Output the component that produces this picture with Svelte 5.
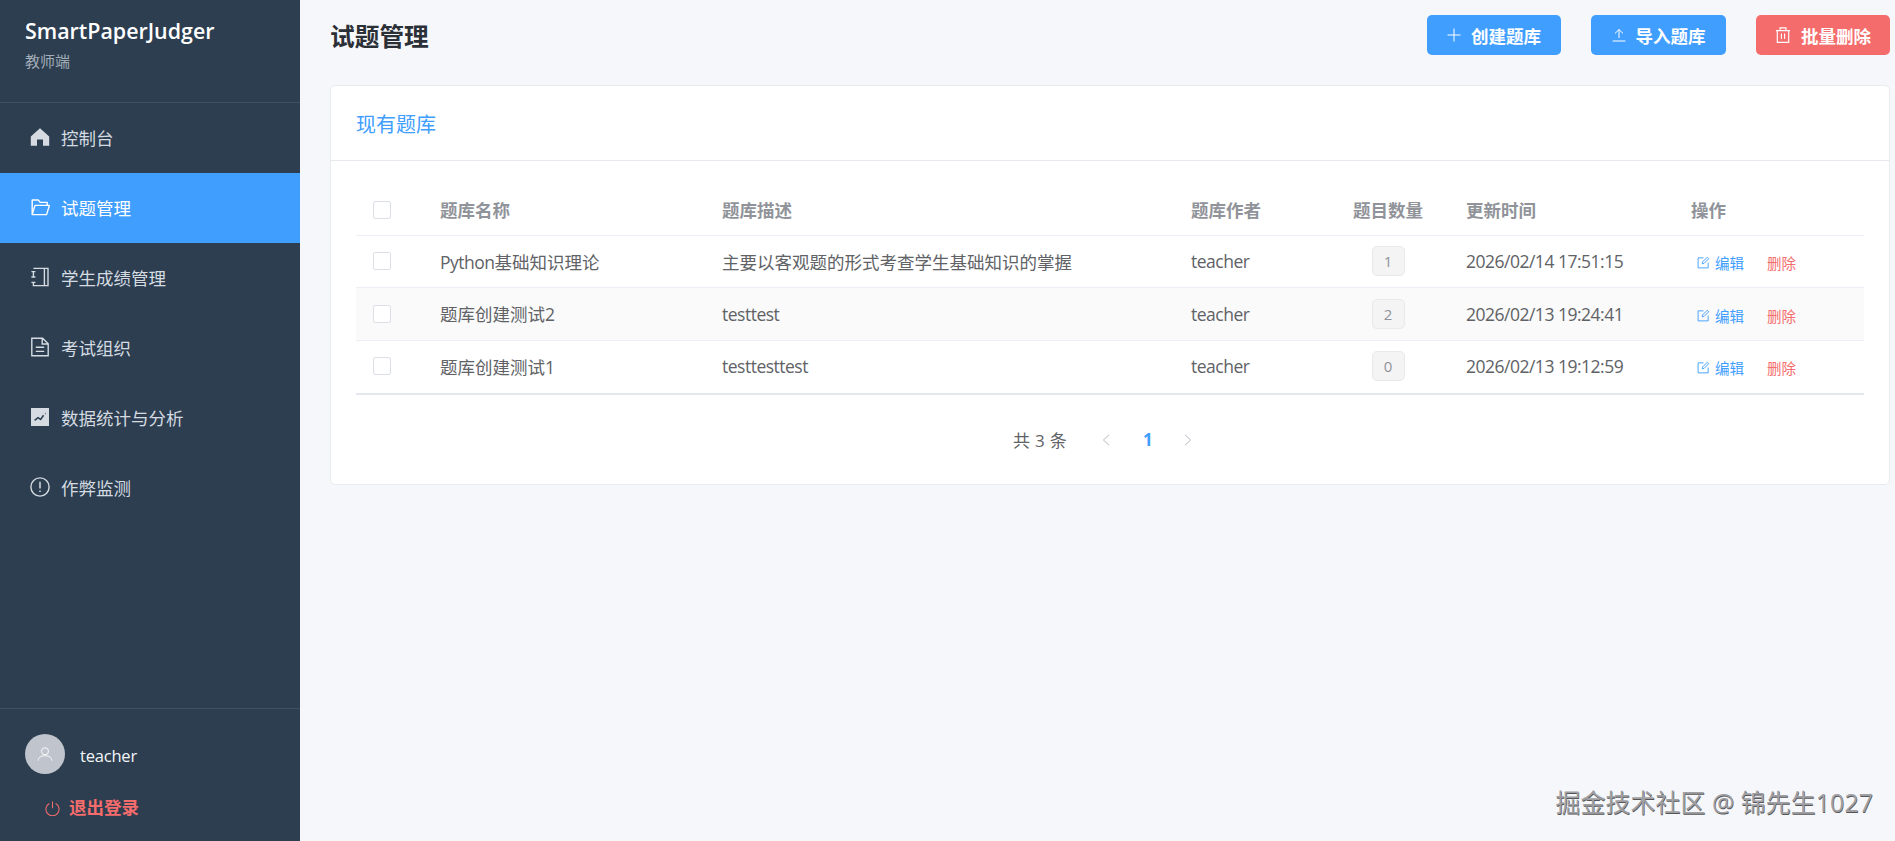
<script>
  const rows = [
    { latin: 'Python', name: '基础知识理论', desc: '主要以客观题的形式考查学生基础知识的掌握', count: 1, time: '2026/02/14 17:51:15' },
    { latin: '', name: '题库创建测试2', desc: 'testtest', latinDesc: true, count: 2, time: '2026/02/13 19:24:41' },
    { latin: '', name: '题库创建测试1', desc: 'testtesttest', latinDesc: true, count: 0, time: '2026/02/13 19:12:59' }
  ];
  const nav = [
    { key: 'home', label: '控制台' },
    { key: 'folder', label: '试题管理', active: true },
    { key: 'book', label: '学生成绩管理' },
    { key: 'doc', label: '考试组织' },
    { key: 'chart', label: '数据统计与分析' },
    { key: 'warn', label: '作弊监测' }
  ];
</script>

<div class="layout">
  <aside class="sidebar">
    <div class="brand">
      <div class="brand-name">SmartPaperJudger</div>
      <div class="brand-sub">教师端</div>
    </div>
    <nav class="menu">
      {#each nav as item}
        <div class="menu-item" class:active={item.active}>
          <svg class="menu-icon" viewBox="0 0 20 20" fill="none" stroke="currentColor" stroke-width="1.4">
            {#if item.key === 'home'}
              <path fill="currentColor" stroke="none" d="M10 1.2 19.2 9.4V18.8H13V12.4H7V18.8H.8V9.4Z" />
            {:else if item.key === 'folder'}
              <path d="M2.2 17.6V3h6l2 2.4h7v3M2.2 17.6h14.4l2.8-9.2H5Z" stroke-linejoin="round" />
            {:else if item.key === 'book'}
              <path d="M3.4 1.4H18V18.6H3.4V15.4M3.4 10V4.6M14.4 1.4V18.6M1.4 4.6h4M1.4 10h4M1.4 15.4h4" />
            {:else if item.key === 'doc'}
              <path d="M1.8 1.2H12.6L18.2 6.8V18.8H1.8ZM12.2 1.4V7H18M5.8 10.2h8.4M5.8 14.4h8.4" />
            {:else if item.key === 'chart'}
              <path fill="currentColor" stroke="none" d="M1 1H19V19H1Z" />
              <path d="M4.6 13.4 8 10.6l2.6 1.8 3-4.2M15 6.4h.6" stroke="#2c3e50" stroke-width="1.5" />
            {:else}
              <circle cx="10" cy="10" r="9.1" />
              <path d="M10 4.8V11.6M10 13.6V15" stroke-width="1.5" />
            {/if}
          </svg>
          <span>{item.label}</span>
        </div>
      {/each}
    </nav>
    <div class="account">
      <div class="user">
        <div class="avatar">
          <svg viewBox="0 0 20 20" fill="none" stroke="#fff" stroke-width="1.1">
            <circle cx="10" cy="6.6" r="4.4" />
            <path d="M1.6 18.4c0-4.2 3-6.2 8.4-6.2s8.4 2 8.4 6.2" />
          </svg>
        </div>
        <span class="user-name">teacher</span>
      </div>
      <div class="logout">
        <svg viewBox="0 0 16 16" fill="none" stroke="currentColor" stroke-width="1.1">
          <path d="M4.6 2.6A7 7 0 1 0 11.4 2.6M8 .6V7.6" />
        </svg>
        <span>退出登录</span>
      </div>
    </div>
  </aside>

  <main class="main">
    <header class="top">
      <h1>试题管理</h1>
      <div class="actions">
        <button class="btn">
          <svg viewBox="0 0 14 14" fill="none" stroke="currentColor" stroke-width="1"><path d="M7 .5v13M.5 7h13" /></svg>
          <span>创建题库</span>
        </button>
        <button class="btn wide">
          <svg viewBox="0 0 14 14" fill="none" stroke="currentColor" stroke-width="1"><path d="M.6 13h12.8M7 10V1.5M3 5.4 7 1.5l4 3.9" /></svg>
          <span>导入题库</span>
        </button>
        <button class="btn danger">
          <svg viewBox="0 0 14 14" fill="none" stroke="currentColor" stroke-width="1"><path d="M.8 3.2h12.4M4.4 3.2V.8h5.2v2.4M2 3.2v10.2h10V3.2M5.6 5.6v5M8.4 5.6v5" /></svg>
          <span>批量删除</span>
        </button>
      </div>
    </header>

    <section class="card">
      <div class="card-head">现有题库</div>
      <div class="card-body">
        <table>
          <colgroup>
            <col style="width:84px" /><col style="width:282px" /><col style="width:469px" /><col style="width:119px" />
            <col style="width:156px" /><col style="width:225px" /><col style="width:173px" />
          </colgroup>
          <thead>
            <tr>
              <th><span class="check"></span></th>
              <th>题库名称</th>
              <th>题库描述</th>
              <th>题库作者</th>
              <th class="center">题目数量</th>
              <th>更新时间</th>
              <th>操作</th>
            </tr>
          </thead>
          <tbody>
            {#each rows as row, i}
              <tr class:striped={i === 1} class:tall={i > 0}>
                <td><span class="check"></span></td>
                <td><span class="latin">{row.latin}</span>{row.name}</td>
                <td class:latin={row.latinDesc}>{row.desc}</td>
                <td class="latin">teacher</td>
                <td class="center"><span class="badge">{row.count}</span></td>
                <td class="latin">{row.time}</td>
                <td>
                  <div class="ops">
                    <span class="op edit">
                      <svg viewBox="0 0 14 14" fill="none" stroke="currentColor" stroke-width="1"><path d="M7 2H1.2v10.8H12V7M5.6 8.4 6 6.4 11 1.4l1.6 1.6-5 5Z" /></svg>
                      编辑
                    </span>
                    <span class="op del">删除</span>
                  </div>
                </td>
              </tr>
            {/each}
          </tbody>
        </table>
        <div class="pager">
          <span class="total">共 3 条</span>
          <svg class="arrow" viewBox="0 0 8 12" fill="none" stroke="currentColor" stroke-width="1"><path d="M7 .8 1.4 6 7 11.2" /></svg>
          <span class="page">1</span>
          <svg class="arrow" viewBox="0 0 8 12" fill="none" stroke="currentColor" stroke-width="1"><path d="M1 .8 6.6 6 1 11.2" /></svg>
        </div>
      </div>
    </section>
  </main>
  <div class="mark">掘金技术社区 @ 锦先生1027</div>
</div>

<style>
  :global(body) {
    margin: 0;
    background: #f5f7fb;
    font-family: "Open Sans", "Noto Sans CJK SC", sans-serif;
  }
  .layout {
    display: flex;
    height: 841px;
    overflow: hidden;
    position: relative;
  }
  .sidebar {
    width: 300px;
    flex: none;
    display: flex;
    flex-direction: column;
    background: #2c3e50;
    color: #fff;
  }
  .brand {
    height: 103px;
    box-sizing: border-box;
    padding: 15px 25px 0;
    border-bottom: 1px solid rgba(255, 255, 255, 0.1);
  }
  .brand-name {
    font-size: 21.4px;
    line-height: 32px;
    font-weight: 600;
  }
  .brand-sub {
    margin-top: 1px;
    font-size: 15px;
    line-height: 26px;
    color: #a3adb8;
  }
  .menu {
    flex: 1;
  }
  .menu-item {
    height: 70px;
    box-sizing: border-box;
    padding: 0 0 2px 30px;
    display: flex;
    align-items: center;
    gap: 11px;
    font-size: 17.5px;
    color: #d5dbe1;
  }
  .menu-item.active {
    background: #409eff;
    color: #fff;
  }
  .menu-icon {
    width: 20px;
    height: 20px;
    flex: none;
  }
  .account {
    height: 133px;
    box-sizing: border-box;
    padding: 25px 25px 0;
    border-top: 1px solid rgba(255, 255, 255, 0.1);
  }
  .user {
    display: flex;
    align-items: center;
    gap: 15px;
    font-size: 16.5px;
    letter-spacing: -0.2px;
    color: #f4f6f8;
  }
  .user-name {
    padding-top: 2px;
  }
  .avatar {
    width: 40px;
    height: 40px;
    border-radius: 50%;
    background: #c0c4cc;
    display: flex;
    align-items: center;
    justify-content: center;
  }
  .avatar svg {
    width: 16px;
    height: 16px;
  }
  .logout {
    display: flex;
    align-items: center;
    gap: 9px;
    margin: 20px 0 0 20px;
    color: #f56c6c;
    font-size: 17.5px;
    font-weight: 600;
    line-height: 26px;
  }
  .logout svg {
    width: 15px;
    height: 15px;
    margin-top: 2px;
  }
  .main {
    flex: 1;
    min-width: 0;
    padding: 15px 5px 0 30px;
  }
  .top {
    display: flex;
    align-items: center;
    justify-content: space-between;
    height: 40px;
  }
  h1 {
    margin: 0;
    padding-top: 4px;
    font-size: 24.7px;
    line-height: 40px;
    font-weight: 600;
    color: #2b2f36;
  }
  .actions {
    display: flex;
    gap: 30px;
  }
  .btn {
    width: 134px;
    height: 40px;
    border: 0;
    border-radius: 5px;
    padding: 0;
    display: flex;
    align-items: center;
    justify-content: center;
    gap: 10px;
    background: #409eff;
    color: #fff;
    font: 600 17.5px "Open Sans", "Noto Sans CJK SC", sans-serif;
  }
  .btn.wide {
    width: 135px;
  }
  .btn.danger {
    background: #f56c6c;
  }
  .btn svg {
    width: 14px;
    height: 14px;
  }
  .btn.danger svg {
    width: 16px;
    height: 16px;
  }
  .card {
    margin-top: 30px;
    height: 400px;
    box-sizing: border-box;
    background: #fff;
    border: 1px solid #e8ebf0;
    border-radius: 5px;
  }
  .card-head {
    height: 75px;
    box-sizing: border-box;
    padding: 0 25px;
    display: flex;
    align-items: center;
    border-bottom: 1px solid #e6e9ee;
    color: #409eff;
    font-size: 20px;
  }
  .card-body {
    padding: 23px 25px 0;
  }
  table {
    width: 1508px;
    table-layout: fixed;
    border-collapse: collapse;
    font-size: 17.5px;
    color: #606266;
  }
  th {
    height: 51px;
    padding: 0;
    text-align: left;
    font-weight: 600;
    color: #909399;
    border-bottom: 1px solid #ebeef5;
  }
  td {
    height: 52px;
    box-sizing: border-box;
    padding: 0 0 1px;
    border-bottom: 1px solid #ebeef5;
  }
  .tall td {
    height: 53px;
  }
  tbody tr:last-child td {
    border-bottom: 2px solid #e4e7ed;
  }
  .striped td {
    background: #fafafa;
  }
  th.center,
  td.center {
    text-align: center;
  }
  .latin {
    letter-spacing: -0.5px;
  }
  .check {
    display: block;
    width: 16px;
    height: 16px;
    margin-left: 17px;
    background: #fff;
    border: 1px solid #dcdfe6;
    border-radius: 2px;
  }
  .badge {
    display: inline-flex;
    align-items: center;
    justify-content: center;
    width: 33px;
    height: 30px;
    box-sizing: border-box;
    background: #f4f4f5;
    border: 1px solid #e9e9eb;
    border-radius: 5px;
    color: #909399;
    font-size: 15px;
    vertical-align: middle;
  }
  .ops {
    display: flex;
    gap: 23px;
    padding: 3px 0 0 6px;
    font-size: 14.5px;
  }
  .op {
    display: flex;
    align-items: center;
    gap: 5px;
  }
  .op svg {
    width: 13px;
    height: 13px;
  }
  .edit {
    color: #409eff;
  }
  .del {
    color: #f56c6c;
  }
  .pager {
    display: flex;
    align-items: center;
    height: 90px;
    padding-left: 657px;
    color: #606266;
    font-size: 17px;
  }
  .total {
    width: 89px;
    letter-spacing: 0.3px;
  }
  .arrow {
    width: 8px;
    height: 12px;
    color: #b4b8bf;
  }
  .page {
    width: 8px;
    margin: 0 33px;
    color: #409eff;
    font-weight: 700;
  }
  .mark {
    position: absolute;
    right: 22px;
    bottom: 24px;
    font-size: 25px;
    line-height: 30px;
    color: #a0a0a4;
    text-shadow: 0.5px 0.5px 0.5px #555;
  }
</style>
